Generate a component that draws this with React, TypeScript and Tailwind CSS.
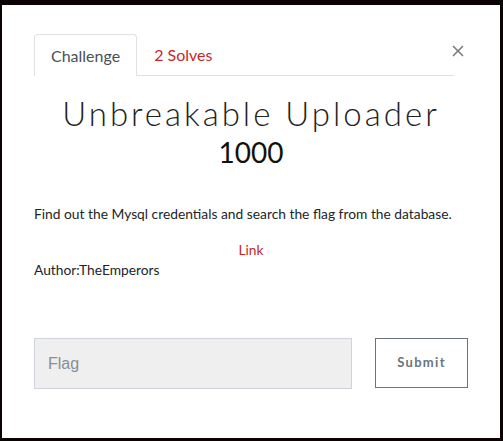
import { X } from "lucide-react"

export default function App() {
    return (
        <div className="w-[503px] h-[441px] bg-[#0b0203] pt-[5px] pl-[2px] font-['Lato','Liberation_Sans',sans-serif]">
            <div className="w-[498px] h-[433px] bg-white px-[32px] pt-[29px] relative">
                <button className="absolute right-[33px] top-[37px] text-[#7a7a7a]">
                    <X size={18} strokeWidth={2.2} />
                </button>

                <div className="flex w-[420px] border-b border-[#dee2e6]">
                    <div className="h-[42px] px-[16px] flex items-center border border-b-0 border-[#dee2e6] rounded-t-[4px] bg-white -mb-px text-[16px] text-[#495057]">
                        Challenge
                    </div>
                    <div className="h-[41px] px-[17px] flex items-center text-[16px] text-[#c62828]">
                        2 Solves
                    </div>
                </div>

                <h1 className="mt-[16px] text-center text-[33px] font-light tracking-[3px] leading-[42px] text-[#222]">
                    Unbreakable Uploader
                </h1>
                <div className="text-center text-[28px] leading-[32px] text-[#111] mt-[2px]">
                    1000
                </div>

                <p className="mt-[36px] text-[13.8px] text-[#212529] leading-[20px]">
                    Find out the Mysql credentials and search the flag from the database.
                </p>
                <div className="mt-[16px] text-center text-[13.8px] text-[#c62828] leading-[20px]">Link</div>
                <div className="text-[13.8px] text-[#212529] leading-[20px]">Author:TheEmperors</div>

                <div className="flex items-start mt-[58px]">
                    <input
                        placeholder="Flag"
                        className="w-[318px] h-[51px] bg-[#efefef] border border-[#ced4da] px-[13px] text-[16px] font-['Liberation_Sans',sans-serif] placeholder:text-[#868e96] outline-none"
                    />
                    <button className="ml-[23px] w-[93px] h-[50px] border border-[#6c757d] text-[13px] font-bold tracking-[1.3px] text-[#6c757d]">
                        Submit
                    </button>
                </div>
            </div>
        </div>
    )
}
